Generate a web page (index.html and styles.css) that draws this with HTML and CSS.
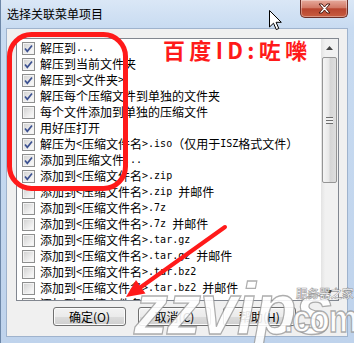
FILE: index.html
```html
<!DOCTYPE html>
<html lang="zh-CN">
<head>
  <meta charset="UTF-8">
  <title>选择关联菜单项目</title>
  <link rel="stylesheet" href="styles.css">
</head>
<body>

<div class="window">
  <div class="titlebar">
    <span class="title">选择关联菜单项目</span>
    <div class="close">
      <svg width="13" height="11" viewBox="0 0 13 11"><path d="M1 1h3l2.5 3 2.5-3h3l-4 4.5 4 4.5h-3l-2.5-3-2.5 3h-3l4-4.5z" fill="#fff" stroke="#4a1a12" stroke-width="1"/></svg>
    </div>
  </div>

  <div class="client">
    <div class="listbox">
      <ul class="items">
        <li><span class="cb on"><svg viewBox="0 0 11 11"><path d="M2 5.5l2.3 2.8L9 2.5"/></svg></span>解压到<span class="lat">...</span></li>
        <li><span class="cb on"><svg viewBox="0 0 11 11"><path d="M2 5.5l2.3 2.8L9 2.5"/></svg></span>解压到当前文件夹</li>
        <li><span class="cb on"><svg viewBox="0 0 11 11"><path d="M2 5.5l2.3 2.8L9 2.5"/></svg></span>解压到<span class="lat">&lt;</span>文件夹<span class="lat">&gt;</span></li>
        <li><span class="cb on"><svg viewBox="0 0 11 11"><path d="M2 5.5l2.3 2.8L9 2.5"/></svg></span>解压每个压缩文件到单独的文件夹</li>
        <li><span class="cb"></span>每个文件添加到单独的压缩文件</li>
        <li><span class="cb on"><svg viewBox="0 0 11 11"><path d="M2 5.5l2.3 2.8L9 2.5"/></svg></span>用好压打开</li>
        <li><span class="cb on"><svg viewBox="0 0 11 11"><path d="M2 5.5l2.3 2.8L9 2.5"/></svg></span>解压为<span class="lat">&lt;</span>压缩文件名<span class="lat">&gt;.iso</span>（仅用于<span class="lat">ISZ</span>格式文件）</li>
        <li><span class="cb on"><svg viewBox="0 0 11 11"><path d="M2 5.5l2.3 2.8L9 2.5"/></svg></span>添加到压缩文件<span class="lat">...</span></li>
        <li><span class="cb on"><svg viewBox="0 0 11 11"><path d="M2 5.5l2.3 2.8L9 2.5"/></svg></span>添加到<span class="lat">&lt;</span>压缩文件名<span class="lat">&gt;.zip</span></li>
        <li><span class="cb"></span>添加到<span class="lat">&lt;</span>压缩文件名<span class="lat">&gt;.zip&nbsp;</span>并邮件</li>
        <li><span class="cb"></span>添加到<span class="lat">&lt;</span>压缩文件名<span class="lat">&gt;.7z</span></li>
        <li><span class="cb"></span>添加到<span class="lat">&lt;</span>压缩文件名<span class="lat">&gt;.7z&nbsp;</span>并邮件</li>
        <li><span class="cb"></span>添加到<span class="lat">&lt;</span>压缩文件名<span class="lat">&gt;.tar.gz</span></li>
        <li><span class="cb"></span>添加到<span class="lat">&lt;</span>压缩文件名<span class="lat">&gt;.tar.gz&nbsp;</span>并邮件</li>
        <li><span class="cb"></span>添加到<span class="lat">&lt;</span>压缩文件名<span class="lat">&gt;.tar.bz2</span></li>
        <li><span class="cb"></span>添加到<span class="lat">&lt;</span>压缩文件名<span class="lat">&gt;.tar.bz2&nbsp;</span>并邮件</li>
        <li><span class="cb"></span>添加到<span class="lat">&lt;</span>压缩文件名<span class="lat">&gt;.tar</span></li>
      </ul>
      <div class="vscroll">
        <div class="sbtn"><svg width="7" height="4" viewBox="0 0 7 4"><path d="M0 4L3.5 0 7 4z" fill="#444"/></svg></div>
        <div class="thumb"><span class="grip"></span></div>
        <div class="track"></div>
        <div class="sbtn"><svg width="7" height="4" viewBox="0 0 7 4"><path d="M0 0h7L3.5 4z" fill="#444"/></svg></div>
      </div>
    </div>

    <div class="buttons">
      <button class="btn">确定(O)</button>
      <button class="btn">取消(C)</button>
      <button class="btn">帮助(H)</button>
    </div>
  </div>

  <!-- red marks drawn over the dialog -->
  <svg class="marks" width="354" height="343" viewBox="0 0 354 343">
    <rect x="9.5" y="34.5" width="116" height="154" rx="22" fill="none" stroke="#ff1a1a" stroke-width="5"/>
    <text x="163" y="59" font-size="22" font-weight="bold" fill="#ff1a1a" font-family="Noto Sans CJK SC, sans-serif" textLength="144" lengthAdjust="spacing">百度ID:咗嚛</text>
    <line x1="225" y1="227" x2="141" y2="287" stroke="#ff1a1a" stroke-width="4" stroke-linecap="round"/>
    <path d="M126 297L145.5 293.5 136 280z" fill="#ff1a1a"/>
  </svg>

  <div class="wm">
    <span class="wm-big">zzvips</span>
    <span class="wm-cn">服务器之家</span>
    <span class="wm-com">.com</span>
  </div>

  <svg class="cursor" width="13" height="21" viewBox="0 0 13 21">
    <path d="M0.5 0.5V17L4.5 13.2 7.3 19.6 9.8 18.5 7.1 12.3H12.3Z" fill="#fff" stroke="#000" stroke-width="1" stroke-linejoin="round"/>
  </svg>
</div>

</body>
</html>
```

FILE: styles.css
```css
*{
  box-sizing: border-box;
}

body{
  margin: 0;
  font-family: "Noto Sans CJK SC", sans-serif;
  font-size: 12px;
  color: #000;
}

.window{
  position: relative;
  width: 354px;
  height: 343px;
  overflow: hidden;
  display: flex;
  flex-direction: column;
  background: linear-gradient(#dae7f6, #c8dbf1 28px, #bfd3ec);
  box-shadow: inset 1px 0 #6d87a8;
}

.titlebar{
  height: 28px;
  display: flex;
  align-items: flex-start;
}

.title{
  padding: 6px 0 0 7px;
  line-height: 16px;
}

.close{
  margin-left: auto;
  margin-right: 6px;
  width: 48px;
  height: 18px;
  display: flex;
  align-items: center;
  justify-content: center;
  border: 1px solid #6b2f28;
  border-top: none;
  border-radius: 0 0 5px 5px;
  background: linear-gradient(#e6aa9c, #d27a67 45%, #b8452f 52%, #c85d40);
  box-shadow: inset 0 0 0 1px rgba(255,255,255,.35);
}

.client{
  flex: 1;
  margin: 0 6px 6px 6px;
  padding: 9px 8px 0 9px;
  display: flex;
  flex-direction: column;
  background: #f0f0f0;
  border: 1px solid #9fb3cd;
}

.listbox{
  height: 263px;
  display: flex;
  background: #fff;
  border: 1px solid #828790;
}

.items{
  flex: 1;
  margin: 0;
  padding: 1px 0 0 5px;
  list-style: none;
  overflow: hidden;
}

.items li{
  height: 16px;
  display: flex;
  align-items: center;
  white-space: nowrap;
  line-height: 16px;
}

.cb{
  flex: none;
  width: 13px;
  height: 13px;
  margin-right: 5px;
  border: 1px solid #8e8f8f;
  background: linear-gradient(135deg, #cfcfcf, #f6f6f6 80%);
  box-shadow: inset 0 0 0 1px #f3f3f3;
}

.cb svg{
  display: block;
  width: 11px;
  height: 11px;
}

.cb svg path{
  fill: none;
  stroke: #3d5291;
  stroke-width: 1.7;
}

.lat{
  font-family: "DejaVu Sans Mono", monospace;
  font-size: 10px;
}

.vscroll{
  width: 17px;
  display: flex;
  flex-direction: column;
  background: linear-gradient(to right, #e3e3e3, #f1f1f1 25%, #f1f1f1);
}

.sbtn{
  height: 17px;
  display: flex;
  align-items: center;
  justify-content: center;
}

.thumb{
  height: 126px;
  margin: 1px 1px 0;
  display: flex;
  align-items: center;
  justify-content: center;
  border: 1px solid #959595;
  border-radius: 2px;
  background: linear-gradient(to right, #f5f5f5, #e8e8e8 45%, #d5d5d5 55%, #dedede);
}

.grip{
  width: 7px;
  height: 7px;
  background: repeating-linear-gradient(#6e6e6e 0 1px, #f0f0f0 1px 3px);
}

.track{
  flex: 1;
}

.buttons{
  display: flex;
  gap: 12px;
  margin-top: 6px;
  padding-left: 37px;
}

.btn{
  width: 73px;
  height: 19px;
  padding: 0;
  display: flex;
  align-items: center;
  justify-content: center;
  font-family: inherit;
  font-size: 12px;
  line-height: 1;
  color: #000;
  border: 1px solid #707070;
  border-radius: 3px;
  background: linear-gradient(#f2f2f2, #ebebeb 50%, #dcdcdc 50%, #cfcfcf);
  box-shadow: inset 0 0 0 1px #fbfbfb;
}

.marks{
  position: absolute;
  left: 0;
  top: 0;
  pointer-events: none;
}

.wm span{
  position: absolute;
  white-space: nowrap;
  font-family: "Liberation Sans", sans-serif;
  font-weight: bold;
  color: rgba(255,255,255,.88);
  -webkit-text-stroke: 1.2px rgba(140,140,140,.7);
}

.wm-big{
  left: 134px;
  top: 282px;
  font-size: 68px;
  font-style: italic;
  letter-spacing: -1px;
  line-height: 56px;
  transform: scaleY(1.05);
  transform-origin: left bottom;
}

.wm-cn{
  left: 296px;
  top: 286px;
  font-size: 11.5px;
  line-height: 14px;
  font-family: "Noto Sans CJK SC", sans-serif !important;
  -webkit-text-stroke: .6px rgba(110,110,110,.7) !important;
}

.wm-com{
  left: 284px;
  top: 300px;
  font-size: 33px;
  line-height: 34px;
  letter-spacing: -1px;
  transform: scaleY(1.15);
  transform-origin: left top;
}

.cursor{
  position: absolute;
  left: 269px;
  top: 10px;
}
```
